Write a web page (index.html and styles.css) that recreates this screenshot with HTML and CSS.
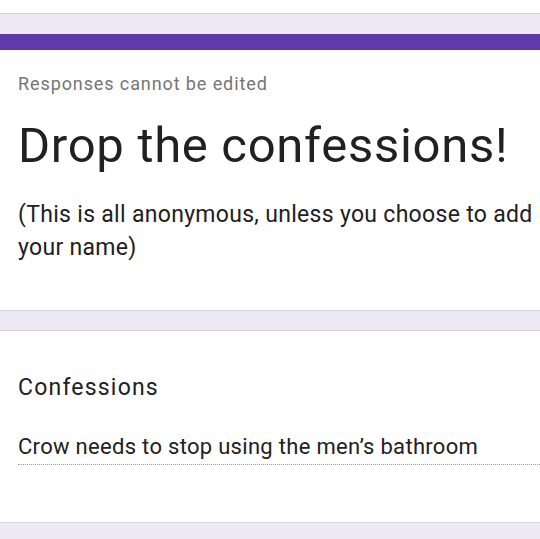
FILE: index.html
```html
<!DOCTYPE html>
<html lang="en">
<head>
  <meta charset="UTF-8" />
  <title>Drop the confessions!</title>
  <meta name="viewport" content="width=device-width, initial-scale=1" />
  <link rel="stylesheet" href="styles.css">
</head>
<body>

  <!-- bottom of the previous card -->
  <div class="top-strip"></div>

  <!-- Header card -->
  <div class="card header-card">
    <div class="notice">Responses cannot be edited</div>
    <h1 class="form-title">Drop the confessions!</h1>
    <div class="form-desc">(This is all anonymous, unless you choose to add your name)</div>
  </div>

  <!-- Question card -->
  <div class="card question-card">
    <div class="question">Confessions</div>
    <div class="answer">Crow needs to stop using the men’s bathroom</div>
  </div>

</body>
</html>
```

FILE: styles.css
```css
html, body {
  margin: 0;
  padding: 0;
  font-family: 'Roboto', 'Liberation Sans', sans-serif;
  background: #ede9f5;
  color: #212121;
  overflow: hidden;
}

.top-strip {
  height: 13px;
  background: #fff;
  border-bottom: 1px solid #d6d3dc;
}

.card {
  background: #fff;
  border-top: 1px solid #d6d3dc;
  border-bottom: 1px solid #d6d3dc;
  padding: 0 0 0 18px;
  box-sizing: border-box;
}

.header-card {
  margin-top: 20px;
  border-top: 16px solid #5f3aad;
  height: 277px;
  padding-top: 23px;
}

.notice {
  font-size: 18px;
  line-height: 22px;
  color: #757575;
  letter-spacing: 0.9px;
}

.form-title {
  margin: 21px 0 0;
  font-size: 49px;
  font-weight: 400;
  line-height: 60px;
  letter-spacing: 0.7px;
}

.form-desc {
  margin-top: 22px;
  font-size: 23px;
  line-height: 33px;
  letter-spacing: 0.3px;
}

.question-card {
  margin-top: 19px;
  height: 193px;
  padding-top: 43px;
}

.question {
  font-size: 23px;
  line-height: 28px;
  letter-spacing: 1.2px;
}

.answer {
  margin-top: 31px;
  font-size: 22px;
  line-height: 28px;
  letter-spacing: 0.3px;
  padding-bottom: 3px;
  border-bottom: 1px dotted #9a9a9a;
}
```
